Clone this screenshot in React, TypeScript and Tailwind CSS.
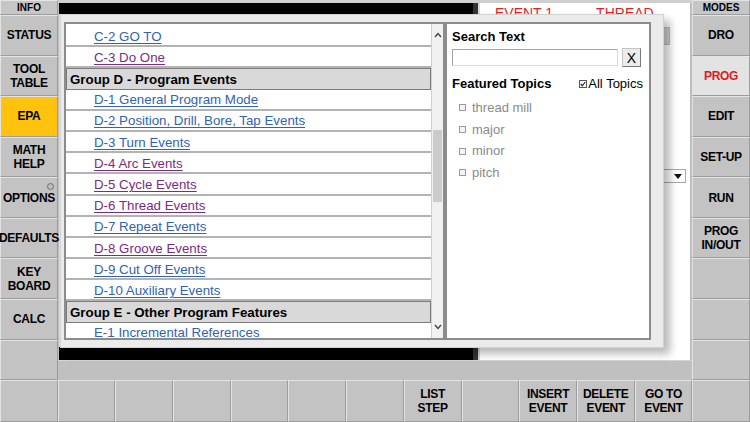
import React from 'react';

type Row = { label: string; group?: boolean; visited?: boolean };

const rows: Row[] = [
  { label: 'C-2 GO TO' },
  { label: 'C-3 Do One', visited: true },
  { label: 'Group D - Program Events', group: true },
  { label: 'D-1 General Program Mode' },
  { label: 'D-2 Position, Drill, Bore, Tap Events' },
  { label: 'D-3 Turn Events' },
  { label: 'D-4 Arc Events', visited: true },
  { label: 'D-5 Cycle Events', visited: true },
  { label: 'D-6 Thread Events', visited: true },
  { label: 'D-7 Repeat Events' },
  { label: 'D-8 Groove Events', visited: true },
  { label: 'D-9 Cut Off Events' },
  { label: 'D-10 Auxiliary Events' },
  { label: 'Group E - Other Program Features', group: true },
  { label: 'E-1 Incremental References' },
];

const leftKeys: string[][] = [
  ['STATUS'],
  ['TOOL', 'TABLE'],
  ['EPA'],
  ['MATH', 'HELP'],
  ['OPTIONS'],
  ['DEFAULTS'],
  ['KEY', 'BOARD'],
  ['CALC'],
  [],
];

const rightKeys: string[][] = [
  ['DRO'],
  ['PROG'],
  ['EDIT'],
  ['SET-UP'],
  ['RUN'],
  ['PROG', 'IN/OUT'],
  [],
  [],
  [],
];

const bottomKeys: string[][] = [
  [], [], [], [], [], [], [],
  ['LIST', 'STEP'],
  [],
  ['INSERT', 'EVENT'],
  ['DELETE', 'EVENT'],
  ['GO TO', 'EVENT'],
  [],
];

const topics = ['thread mill', 'major', 'minor', 'pitch'];

function Key({ lines, tone = 'plain', dot = false, className = '' }: { lines: string[]; tone?: 'plain' | 'epa' | 'mode'; dot?: boolean; className?: string }) {
  const toneClass =
    tone === 'epa'
      ? 'bg-[#ffc30f] text-black'
      : tone === 'mode'
      ? 'bg-[#e3e3e3] text-[#e8141c]'
      : 'bg-[#c3c3c3] text-black';
  return (
    <div
      className={`relative flex flex-col items-center justify-center whitespace-nowrap border border-t-[#e4e4e4] border-l-[#e4e4e4] border-r-[#9d9d9d] border-b-[#9d9d9d] text-[12px] font-bold leading-[14px] tracking-[-0.3px] ${toneClass} ${className}`}
    >
      {lines.map((l) => (
        <span key={l}>{l}</span>
      ))}
      {dot && <span className="absolute top-[5px] right-[3px] h-[7px] w-[7px] rounded-full border border-[#6f6f6f] bg-[#bdbdbd]" />}
    </div>
  );
}

function Header({ label }: { label: string }) {
  return (
    <div className="flex h-[15px] items-center justify-center border border-t-[#e4e4e4] border-l-[#e4e4e4] border-r-[#9d9d9d] border-b-[#9d9d9d] bg-[#c6c6c6] text-[10px] font-bold">
      {label}
    </div>
  );
}

function Chevron({ up }: { up?: boolean }) {
  return (
    <svg width="8" height="6" viewBox="0 0 8 6">
      <polyline
        points={up ? '1,5 4,1.5 7,5' : '1,1 4,4.5 7,1'}
        fill="none"
        stroke="#444"
        strokeWidth="1.4"
      />
    </svg>
  );
}

function HelpList() {
  return (
    <div className="flex h-full w-[381px] border-2 border-[#8c8c8c] bg-white">
      <div className="flex-1 overflow-hidden pt-[2px]">
        {rows.map((r) =>
          r.group ? (
            <div
              key={r.label}
              className="flex h-[21.2px] items-center border border-[#7c7c7c] bg-[#d9d9d9] pl-[3px] pt-[1px] text-[13.3px] font-bold text-black"
            >
              {r.label}
            </div>
          ) : (
            <div
              key={r.label}
              className="flex h-[21.2px] items-center border-b-2 border-[#b3b3b3] pl-[28px] pt-[2px] text-[13.3px]"
            >
              <span className={`underline underline-offset-2 ${r.visited ? 'text-[#7d2a84]' : 'text-[#2f62b8]'}`}>
                {r.label}
              </span>
            </div>
          )
        )}
      </div>
      <div className="flex w-[12px] flex-col items-center border-l border-[#d0d0d0] bg-[#f1f1f1]">
        <div className="flex h-[22px] items-center">
          <Chevron up />
        </div>
        <div className="h-[84px]" />
        <div className="h-[72px] w-[9px] bg-[#cbcbcb]" />
        <div className="flex-1" />
        <div className="flex h-[22px] items-center">
          <Chevron />
        </div>
      </div>
    </div>
  );
}

function SearchPanel() {
  return (
    <div className="flex h-full flex-1 flex-col border-2 border-[#8c8c8c] bg-white pl-[5px] pr-[6px]">
      <div className="mt-[5px] text-[13px] font-bold leading-[16px]">Search Text</div>
      <div className="mt-[3px] flex items-center gap-[4px]">
        <div className="h-[17px] w-[166px] border border-[#a4a4a4] border-b-[#dcdcdc] border-r-[#dcdcdc] bg-white" />
        <div className="flex h-[19px] w-[19px] items-center justify-center border border-[#c4c4c4] border-b-[#7a7a7a] border-r-[#7a7a7a] bg-[#ececec] text-[14px] leading-none">
          X
        </div>
      </div>
      <div className="mt-[9px] flex items-center justify-between leading-[16px]">
        <span className="text-[13px] font-bold">Featured Topics</span>
        <span className="flex items-center text-[13px]">
          <svg width="8" height="8" viewBox="0 0 8 8" className="mr-[1px]">
            <rect x="0.5" y="0.5" width="7" height="7" fill="#fff" stroke="#555" />
            <polyline points="1.8,4 3.3,5.8 6.3,2" fill="none" stroke="#222" strokeWidth="1.2" />
          </svg>
          All Topics
        </span>
      </div>
      <div className="mt-[5px] flex flex-col">
        {topics.map((t) => (
          <div key={t} className="flex h-[21.7px] items-center pl-[7px] text-[13px] text-[#8a8a8a]">
            <span className="mr-[6px] h-[7px] w-[7px] border border-[#9a9a9a] bg-[#f4f4f4]" />
            {t}
          </div>
        ))}
      </div>
    </div>
  );
}

export default function App() {
  return (
    <div className="relative h-[422px] w-[750px] overflow-hidden bg-[#c0c0c0] font-['Liberation_Sans',Arial,sans-serif] text-black">
      <div className="flex h-[380px]">
        {/* info column */}
        <div className="flex w-[58px] flex-col">
          <Header label="INFO" />
          {leftKeys.map((k, i) => (
            <Key
              key={i}
              lines={k}
              tone={k[0] === 'EPA' ? 'epa' : 'plain'}
              dot={k[0] === 'OPTIONS'}
              className="flex-1"
            />
          ))}
        </div>

        {/* screen */}
        <div className="flex flex-1 flex-col">
          <div className="h-[3px] bg-[#cfcfcf]" />
          <div className="flex flex-1">
            <div className="flex w-[422px] flex-col pl-[1px]">
              <div className="flex h-[11px]">
                <div className="flex-1 bg-black" />
                <div className="w-[5px] bg-[#333]" />
                <div className="w-[2px] bg-[#d8d8d8]" />
              </div>
              <div className="flex-1 bg-[#e2e2e2]" />
              <div className="flex h-[13px]">
                <div className="flex-1 bg-black" />
                <div className="w-[5px] bg-[#333]" />
                <div className="w-[2px] bg-[#d8d8d8]" />
              </div>
            </div>
            <div className="relative flex-1 bg-white">
              <div className="flex gap-[43px] pl-[15px] pt-[2px] text-[14px] leading-[16px] text-[#ee1c1c]">
                <span>EVENT 1</span>
                <span>THREAD</span>
              </div>
              <div className="absolute left-[183px] top-[24px] h-[18px] w-[7px] border border-[#bdbdbd] bg-[#d2d2d2]" />
              <div className="absolute left-[140px] top-[166px] flex h-[14px] w-[66px] items-center justify-end border border-[#a8a8a8] bg-white pr-[3px]">
                <svg width="8" height="5" viewBox="0 0 8 5">
                  <polygon points="0,0 8,0 4,5" fill="#111" />
                </svg>
              </div>
            </div>
            <div className="w-[2px] bg-[#bdbdbd]" />
          </div>
          <div className="h-[20px] border-t border-[#d6d6d6] bg-[#c0c0c0]" />
        </div>

        {/* modes column */}
        <div className="flex w-[58px] flex-col">
          <Header label="MODES" />
          {rightKeys.map((k, i) => (
            <Key key={i} lines={k} tone={k[0] === 'PROG' && k.length === 1 ? 'mode' : 'plain'} className="flex-1" />
          ))}
        </div>
      </div>

      {/* soft keys */}
      <div className="grid h-[42px] grid-cols-[repeat(13,minmax(0,1fr))]">
        {bottomKeys.map((k, i) => (
          <Key key={i} lines={k} />
        ))}
      </div>

      {/* help dialog */}
      <div className="absolute left-[60px] top-[14px] z-10 flex h-[334px] w-[604px] gap-0 border border-[#d2d2d2] bg-[#ebebeb] pb-[7px] pl-[3px] pr-[12px] pt-[7px] shadow-[6px_6px_8px_rgba(0,0,0,0.28)]">
        <HelpList />
        <SearchPanel />
      </div>
    </div>
  );
}
